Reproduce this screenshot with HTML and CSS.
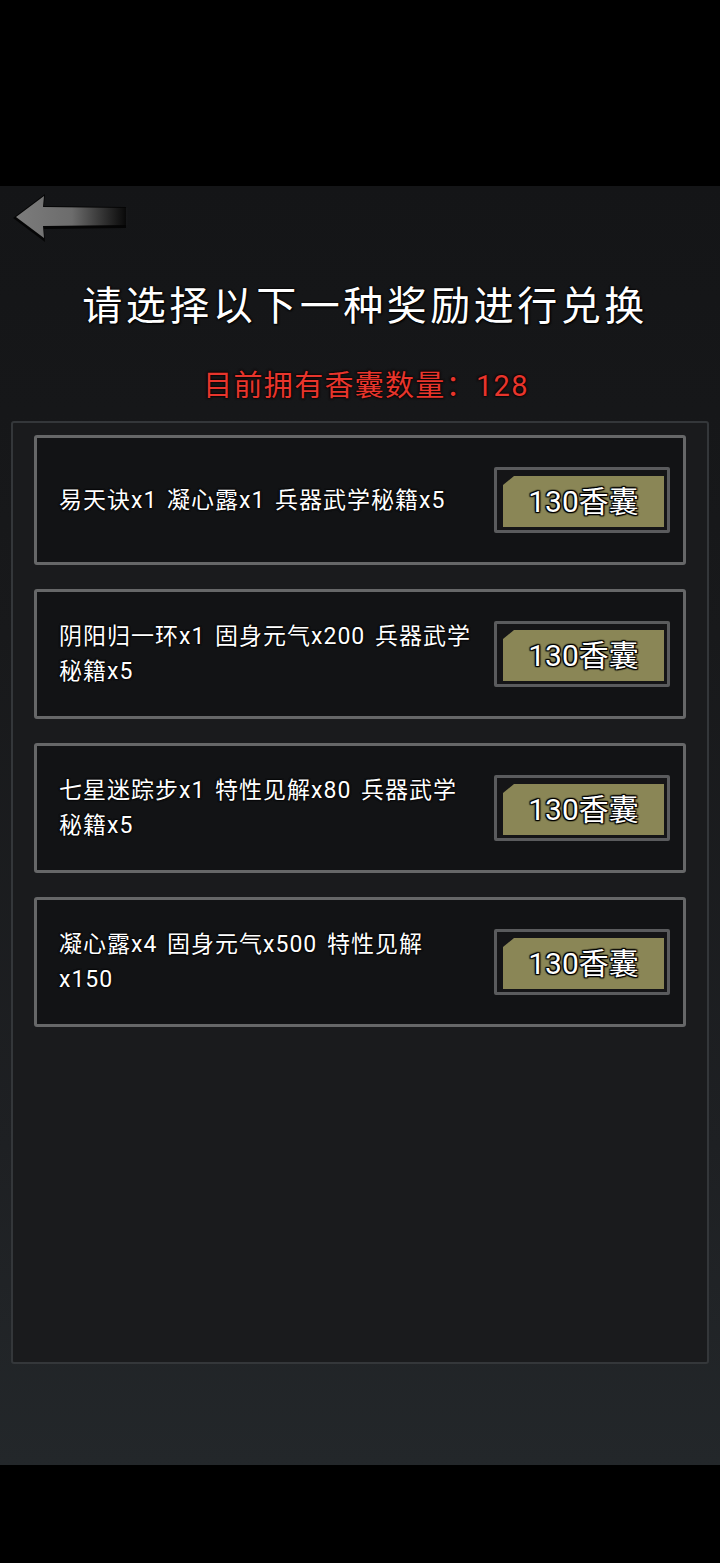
FILE: index.html
```html
<!DOCTYPE html>
<html lang="zh-CN">
<head>
<meta charset="utf-8">
<title>兑换</title>
<link rel="stylesheet" href="styles.css">
</head>
<body>
<div class="bar-top"></div>
<div class="screen">
  <div class="nav">
    <svg class="back" width="122" height="56" viewBox="0 0 122 56">
      <defs>
        <linearGradient id="shaft" x1="0" y1="0" x2="1" y2="0">
          <stop offset="0" stop-color="#7c7c7c"/>
          <stop offset="0.5" stop-color="#6c6c6c"/>
          <stop offset="1" stop-color="#6a6a6a" stop-opacity="0"/>
        </linearGradient>
      </defs>
      <polygon points="1,27 33,3 32,15 114,16 114,37 32,38 33,51" fill="#000" opacity="0.75" transform="translate(0,1)"/>
      <polygon points="4,27 32,6 31,17 116,18 116,35 31,36 32,48" fill="url(#shaft)"/>
    </svg>
  </div>
  <h1 class="title">请选择以下一种奖励进行兑换</h1>
  <p class="owned">目前拥有香囊数量：128</p>
  <div class="panel">
    <div class="card">
      <div class="desc">易天诀x1 凝心露x1 兵器武学秘籍x5</div>
      <div class="btn"><div class="btn-face">130香囊</div></div>
    </div>
    <div class="card">
      <div class="desc">阴阳归一环x1 固身元气x200 兵器武学<br>秘籍x5</div>
      <div class="btn"><div class="btn-face">130香囊</div></div>
    </div>
    <div class="card">
      <div class="desc">七星迷踪步x1 特性见解x80 兵器武学<br>秘籍x5</div>
      <div class="btn"><div class="btn-face">130香囊</div></div>
    </div>
    <div class="card">
      <div class="desc">凝心露x4 固身元气x500 特性见解<br>x150</div>
      <div class="btn"><div class="btn-face">130香囊</div></div>
    </div>
  </div>
</div>
<div class="bar-bottom"></div>
</body>
</html>
```

FILE: styles.css
```css
* { box-sizing: border-box; }
html, body { margin: 0; padding: 0; }
body {
  width: 720px;
  height: 1563px;
  background: #000;
  font-family: Roboto, "Noto Sans CJK SC", "Noto Sans", sans-serif;
  color: #fff;
  overflow: hidden;
}
.bar-top { height: 186px; background: #000; }
.bar-bottom { height: 98px; background: #000; }
.screen {
  height: 1279px;
  background: linear-gradient(180deg, #141517 0%, #18191b 35%, #1e2023 75%, #23272a 100%);
  display: flex;
  flex-direction: column;
}
.nav {
  height: 70px;
  padding: 4px 0 0 12px;
}
.back { display: block; }
.title {
  margin: 21px 0 0;
  padding-left: 10px;
  font-size: 40px;
  line-height: 60px;
  font-weight: 400;
  text-align: center;
  letter-spacing: 3.5px;
  text-shadow: 0 0 2px #000, 0 0 2px #000, 1px 1px 2px #000;
}
.owned {
  margin: 29px 0 0;
  padding-left: 12px;
  font-size: 29px;
  line-height: 40px;
  text-align: center;
  letter-spacing: 1.3px;
  color: #e8352c;
  text-shadow: 0 0 2px #000, 0 0 2px #000, 0 0 3px #200;
}
.panel {
  margin: 15px 11px 0;
  height: 943px;
  border: 2px solid #34373a;
  border-radius: 3px;
  background: #1a1b1d;
  padding: 12px 21px 0;
  display: flex;
  flex-direction: column;
  gap: 24px;
}
.card {
  height: 130px;
  border: 3px solid #666768;
  border-radius: 3px;
  background: #121315;
  display: flex;
  align-items: center;
  justify-content: space-between;
  padding: 0 13px 0 22px;
}
.desc {
  font-size: 23px;
  line-height: 35px;
  letter-spacing: 1px;
  word-spacing: 3px;
  text-shadow: 0 0 2px #000, 0 0 2px #000, 0 0 2px #000;
  white-space: nowrap;
}
.btn {
  width: 176px;
  height: 66px;
  border: 3px solid #5a5b5d;
  border-radius: 2px;
  background: #151517;
  padding: 6px 3px 3px 6px;
  flex: none;
}
.btn-face {
  height: 100%;
  background: #8a8656;
  clip-path: polygon(11px 0, 100% 0, 100% 100%, 0 100%, 0 9px);
  display: flex;
  align-items: center;
  justify-content: center;
  font-size: 30px;
  line-height: 1;
  color: #fff;
  padding-top: 1px;
  text-shadow: 0 0 2px #000, 0 0 2px #000, 0 0 2px #000, 1px 1px 1px #000, -1px -1px 1px #000, 1px -1px 1px #000, -1px 1px 1px #000;
}
```
